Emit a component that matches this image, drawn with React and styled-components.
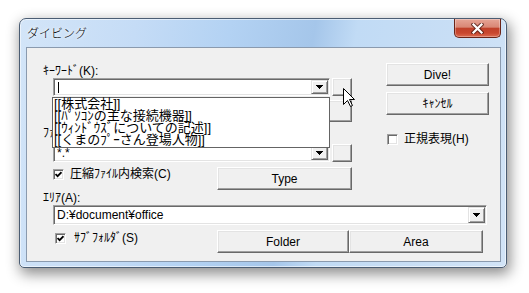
import React from "react";
import styled, { createGlobalStyle } from "styled-components";

const FONT = `"Liberation Sans", "Noto Sans CJK JP", sans-serif`;
const CJK = `"Noto Sans CJK JP", "Liberation Sans", sans-serif`;

const GlobalStyle = createGlobalStyle`
  html, body { margin: 0; padding: 0; background: #fff; }
  body { font-family: ${FONT}; font-size: 12px; color: #000; }
  #root { width: 529px; height: 293px; overflow: hidden; }
`;

const Desktop = styled.div`
  width: 529px;
  height: 293px;
  box-sizing: border-box;
  padding: 18px 0 0 19px;
  background: #fff;
`;

const Window = styled.div`
  width: 488px;
  height: 250px;
  box-sizing: border-box;
  border: 1px solid #4b5d73;
  border-radius: 7px 7px 5px 5px;
  padding: 0 5px 5px 6px;
  display: flex;
  flex-direction: column;
  background: linear-gradient(100deg, #d3e5f8 0%, #c5dcf6 22%, #b3d2f3 40%, #a5c6ea 56%, #c1dbf5 64%, #c8def5 82%, #d2e4f7 100%);
  box-shadow: inset 0 0 0 1px rgba(255, 255, 255, 0.55), 2px 5px 14px 1px rgba(0, 0, 0, 0.45);
`;

const TitleBar = styled.div`
  height: 28px;
  flex-shrink: 0;
  display: flex;
  align-items: flex-start;
  justify-content: space-between;
`;

const Title = styled.div`
  margin: 6px 0 0 1px;
  font-family: ${CJK};
  font-size: 12px;
  font-weight: 300;
  line-height: 16px;
  color: #000;
  text-shadow: 0 0 5px #fff, 0 0 3px #fff;
`;

const CloseButton = styled.div`
  width: 47px;
  height: 19px;
  box-sizing: border-box;
  border: 1px solid #6b2418;
  border-top: none;
  border-radius: 0 0 5px 5px;
  background: linear-gradient(#e6a596 0%, #d98775 45%, #c0412a 52%, #c9472f 78%, #dc6b50 100%);
  box-shadow: inset 0 0 0 1px rgba(255, 255, 255, 0.3);
  display: flex;
  align-items: center;
  justify-content: center;
`;

const Client = styled.div`
  position: relative;
  flex: 1;
  box-sizing: border-box;
  border: 1px solid #8a9aae;
  background: #f0f0f0;
  padding: 15px 0 0 16px;
  display: flex;
  flex-direction: column;
`;

const TopSection = styled.div`
  display: flex;
  gap: 34px;
`;

const Column = styled.div`
  width: ${(p) => p.$w}px;
  display: flex;
  flex-direction: column;
`;

const Label = styled.div`
  height: 14px;
  line-height: 14px;
  margin-top: ${(p) => p.$mt || 0}px;
  white-space: nowrap;
`;

const Row = styled.div`
  display: flex;
  align-items: flex-start;
  gap: ${(p) => p.$gap || 0}px;
  margin-top: ${(p) => p.$mt || 0}px;
  margin-left: ${(p) => p.$ml || 0}px;
`;

const ButtonGroup = styled.div`
  display: flex;
  margin-left: auto;
  margin-right: ${(p) => p.$mr || 0}px;
`;

const Combo = styled.div`
  width: ${(p) => p.$w}px;
  height: ${(p) => p.$h}px;
  box-sizing: border-box;
  background: #fff;
  border: 1px solid;
  border-color: #a0a0a0 #ffffff #ffffff #a0a0a0;
  box-shadow: inset 1px 1px 0 #696969, inset -1px -1px 0 #e3e3e3;
  padding: 1px;
  display: flex;
  align-items: stretch;
`;

const ComboText = styled.div`
  flex: 1;
  padding-left: 2px;
  line-height: ${(p) => p.$lh}px;
  white-space: nowrap;
  overflow: hidden;
  display: flex;
  align-items: center;
`;

const Caret = styled.span`
  display: block;
  width: 1px;
  height: 11px;
  margin-left: 1px;
  background: #000;
`;

const DropButton = styled.div`
  width: 17px;
  box-sizing: border-box;
  background: #f0f0f0;
  border: 1px solid;
  border-color: #e3e3e3 #696969 #696969 #e3e3e3;
  box-shadow: inset 1px 1px 0 #fff, inset -1px -1px 0 #a0a0a0;
  display: flex;
  align-items: center;
  justify-content: center;
`;

const Button = styled.div`
  width: ${(p) => p.$w}px;
  height: ${(p) => p.$h || 23}px;
  margin-left: ${(p) => (p.$push ? "auto" : "0")};
  margin-top: ${(p) => p.$mt || 0}px;
  box-sizing: border-box;
  background: #f0f0f0;
  border: 1px solid;
  border-color: #ffffff #696969 #696969 #ffffff;
  box-shadow: inset -1px -1px 0 #a0a0a0, inset 1px 1px 0 #e3e3e3;
  display: flex;
  align-items: center;
  justify-content: center;
  line-height: 14px;
  white-space: nowrap;
`;

const CheckRow = styled.div`
  display: flex;
  align-items: center;
  gap: ${(p) => p.$gap}px;
  margin-top: ${(p) => p.$mt || 0}px;
  margin-left: ${(p) => p.$ml || 0}px;
  line-height: 14px;
  white-space: nowrap;
`;

const CheckBox = styled.div`
  width: 11px;
  height: 11px;
  box-sizing: border-box;
  background: #fff;
  border: 1px solid;
  border-color: #a0a0a0 #ffffff #ffffff #a0a0a0;
  box-shadow: inset 1px 1px 0 #696969, inset -1px -1px 0 #e3e3e3;
  display: flex;
  align-items: center;
  justify-content: center;
`;

const BottomSection = styled.div`
  display: flex;
  flex-direction: column;
  margin-top: 1px;
`;

const DropList = styled.div`
  position: absolute;
  left: 25px;
  top: 49px;
  width: 278px;
  box-sizing: border-box;
  border: 1px solid #646464;
  background: #fff;
  padding: 0 0 1px 1px;
  z-index: 5;
`;

const ListItem = styled.div`
  height: 12px;
  line-height: 12px;
  font-size: 13px;
  white-space: nowrap;
`;

const Cursor = styled.svg`
  position: absolute;
  left: 316px;
  top: 40px;
  z-index: 6;
`;

const Arrow = () => (
  <svg width="7" height="4" viewBox="0 0 7 4" shapeRendering="crispEdges">
    <rect x="0" y="0" width="7" height="1" fill="#000" />
    <rect x="1" y="1" width="5" height="1" fill="#000" />
    <rect x="2" y="2" width="3" height="1" fill="#000" />
    <rect x="3" y="3" width="1" height="1" fill="#000" />
  </svg>
);

const Check = () => (
  <svg width="7" height="7" viewBox="0 0 7 7">
    <polyline points="0.5,3 2.6,5.2 6.5,1.2" fill="none" stroke="#000" strokeWidth="1.8" />
  </svg>
);

const CloseX = () => (
  <svg width="13" height="11" viewBox="0 0 13 11">
    <path d="M2.5 1.5 L10.5 9.5 M10.5 1.5 L2.5 9.5" stroke="#4a1a12" strokeWidth="4.2" strokeLinecap="square" fill="none" opacity="0.75" />
    <path d="M2.5 1.5 L10.5 9.5 M10.5 1.5 L2.5 9.5" stroke="#fff" strokeWidth="2.2" strokeLinecap="square" fill="none" />
  </svg>
);

const items = [
  "[[株式会社]]",
  "[[ﾊﾟｿｺﾝの主な接続機器]]",
  "[[ｳｨﾝﾄﾞｳｽﾞについての記述]]",
  "[[くまのﾌﾟｰさん登場人物]]",
];

export default function App() {
  return (
    <>
      <GlobalStyle />
      <Desktop>
        <Window>
          <TitleBar>
            <Title>ダイビング</Title>
            <CloseButton>
              <CloseX />
            </CloseButton>
          </TitleBar>
          <Client>
            <TopSection>
              <Column $w={309}>
                <Label $mt={1}>ｷｰﾜｰﾄﾞ(K):</Label>
                <Row $ml={10} $gap={2}>
                  <Combo $w={277} $h={18}>
                    <ComboText $lh={14}>
                      <Caret />
                    </ComboText>
                    <DropButton>
                      <Arrow />
                    </DropButton>
                  </Combo>
                  <Button $w={20} $h={18} />
                </Row>
                <Row $mt={4}>
                  <Button $w={135} $h={22} $push />
                </Row>
                <Label $mt={4}>ﾌｧｲﾙ(F):</Label>
                <Row $mt={4} $ml={10} $gap={2}>
                  <Combo $w={277} $h={18}>
                    <ComboText $lh={14}>*.*</ComboText>
                    <DropButton>
                      <Arrow />
                    </DropButton>
                  </Combo>
                  <Button $w={20} $h={18} />
                </Row>
                <Row $mt={5} $ml={10}>
                  <CheckRow $gap={6}>
                    <CheckBox>
                      <Check />
                    </CheckBox>
                    <span>圧縮ﾌｧｲﾙ内検索(C)</span>
                  </CheckRow>
                  <Button $w={135} $push>Type</Button>
                </Row>
              </Column>
              <Column $w={103}>
                <Button $w={103}>Dive!</Button>
                <Button $w={103} $mt={6}>ｷｬﾝｾﾙ</Button>
                <CheckRow $gap={6} $mt={17} $ml={1}>
                  <CheckBox />
                  <span>正規表現(H)</span>
                </CheckRow>
              </Column>
            </TopSection>
            <BottomSection>
              <Label>ｴﾘｱ(A):</Label>
              <Row $ml={10}>
                <Combo $w={434} $h={20}>
                  <ComboText $lh={16}>D:¥document¥office</ComboText>
                  <DropButton>
                    <Arrow />
                  </DropButton>
                </Combo>
              </Row>
              <Row $mt={5} $ml={12}>
                <CheckRow $gap={8} $mt={1}>
                  <CheckBox>
                    <Check />
                  </CheckBox>
                  <span>ｻﾌﾞﾌｫﾙﾀﾞ(S)</span>
                </CheckRow>
                <ButtonGroup $mr={17}>
                  <Button $w={132}>Folder</Button>
                  <Button $w={134}>Area</Button>
                </ButtonGroup>
              </Row>
            </BottomSection>
            <DropList>
              {items.map((t) => (
                <ListItem key={t}>{t}</ListItem>
              ))}
            </DropList>
            <Cursor width="13" height="20" viewBox="0 0 13 20">
              <path
                d="M0.5 0.5 L0.5 16.5 L4.5 12.5 L7.5 18.5 L9.5 17.5 L6.5 11.5 L11.5 11.5 Z"
                fill="#fff"
                stroke="#000"
                strokeWidth="1"
                strokeLinejoin="miter"
              />
            </Cursor>
          </Client>
        </Window>
      </Desktop>
    </>
  );
}
